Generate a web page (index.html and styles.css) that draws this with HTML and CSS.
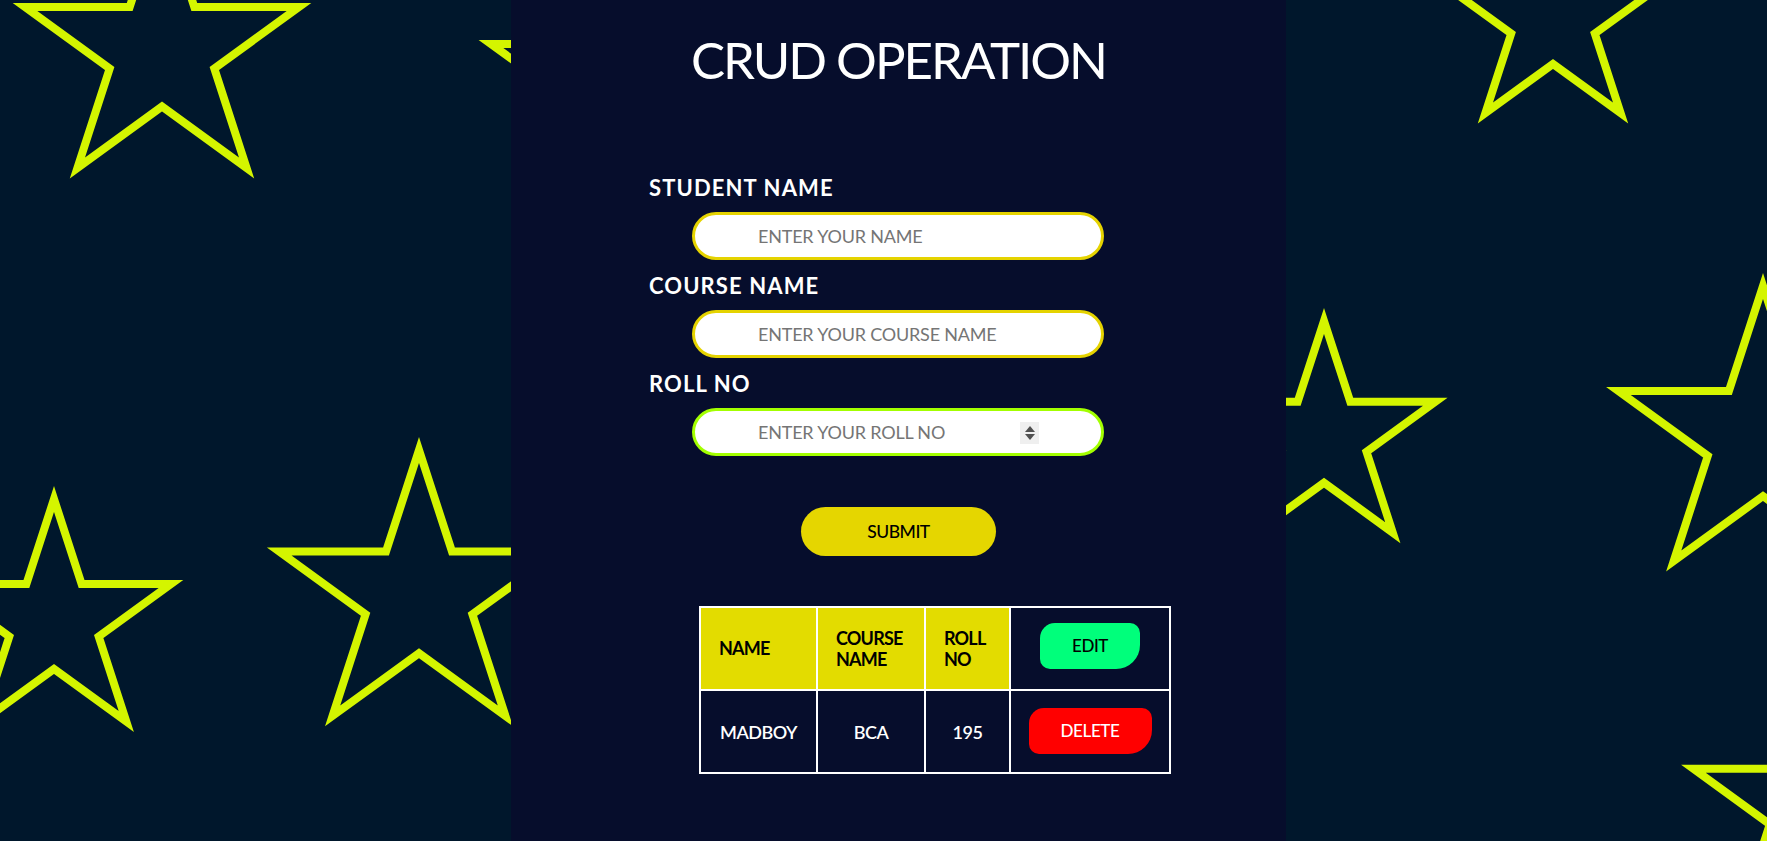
FILE: index.html
```html
<!DOCTYPE html>
<html lang="en">
<head>
<meta charset="utf-8">
<title>CRUD Operation</title>
<link rel="stylesheet" href="styles.css">
</head>
<body>
<svg class="bg-stars" width="1767" height="841" viewBox="0 0 1767 841" aria-hidden="true">
  <g fill="none" stroke="#d4f500" stroke-width="8" stroke-linejoin="miter">
    <polygon points="162,-92.5 194.3,7 299,7 214.3,68.5 246.6,168 162,106.5 77.4,168 109.7,68.5 25,7 129.7,7"/>
    <polygon points="605,-39 631.9,43.9 719.1,43.9 648.6,95.2 675.5,178.1 605,126.8 534.5,178.1 561.4,95.2 490.9,43.9 578.1,43.9"/>
    <polygon points="54,499 81.6,584 171,584 98.7,636.5 126.3,721.5 54,669 -18.3,721.5 9.3,636.5 -63,584 26.4,584"/>
    <polygon points="419,450 452,551.6 558.8,551.6 472.4,614.3 505.4,715.9 419,653.2 332.6,715.9 365.6,614.3 279.2,551.6 386,551.6"/>
    <polygon points="1553,-95 1578.8,-15.5 1662.4,-15.5 1594.8,33.6 1620.6,113 1553,63.9 1485.4,113 1511.2,33.6 1443.6,-15.5 1527.2,-15.5"/>
    <polygon points="1324,321 1350.3,401.8 1435.3,401.8 1366.5,451.8 1392.8,532.7 1324,482.7 1255.2,532.7 1281.5,451.8 1212.7,401.8 1297.7,401.8"/>
    <polygon points="1763,286 1797.1,391 1907.6,391 1818.2,455.9 1852.3,561 1763,496.1 1673.7,561 1707.8,455.9 1618.4,391 1728.9,391"/>
    <polygon points="1817,679 1846.2,768.8 1940.6,768.8 1864.2,824.3 1893.4,914.2 1817,858.7 1740.6,914.2 1769.8,824.3 1693.4,768.8 1787.8,768.8"/>
  </g>
</svg>
<div class="page">
  <main class="panel">
    <h1 class="title">CRUD OPERATION</h1>
    <form class="form">
      <label class="label" for="sname">STUDENT NAME</label>
      <input class="field" id="sname" type="text" placeholder="ENTER YOUR NAME">
      <label class="label" for="cname">COURSE NAME</label>
      <input class="field" id="cname" type="text" placeholder="ENTER YOUR COURSE NAME">
      <label class="label" for="rollno">ROLL NO</label>
      <div class="field-wrap">
        <input class="field field-roll" id="rollno" type="text" placeholder="ENTER YOUR ROLL NO">
        <span class="spin" aria-hidden="true"><span class="spin-up"></span><span class="spin-down"></span></span>
      </div>
      <button class="submit" type="button">SUBMIT</button>
    </form>
    <table class="records">
      <colgroup>
        <col class="c1"><col class="c2"><col class="c3"><col class="c4">
      </colgroup>
      <tr>
        <th>NAME</th>
        <th>COURSE NAME</th>
        <th>ROLL NO</th>
        <td class="action"><button class="btn btn-edit" type="button">EDIT</button></td>
      </tr>
      <tr>
        <td>MADBOY</td>
        <td>BCA</td>
        <td>195</td>
        <td class="action"><button class="btn btn-delete" type="button">DELETE</button></td>
      </tr>
    </table>
  </main>
</div>
</body>
</html>
```

FILE: styles.css
```css
* { box-sizing: border-box; }

html, body {
  margin: 0;
  padding: 0;
}

body {
  background: #00172c;
  min-height: 100vh;
  overflow: hidden;
  font-family: "Lato", "Noto Sans", sans-serif;
}

.bg-stars {
  position: fixed;
  left: 0;
  top: 0;
  z-index: 0;
}

.page {
  position: relative;
  z-index: 1;
  display: flex;
}

.panel {
  margin-left: 511px;
  width: 775px;
  min-height: 841px;
  background: #060d2c;
  display: flex;
  flex-direction: column;
}

.title {
  margin: 34px 0 0;
  font-size: 51px;
  line-height: 1;
  font-weight: 400;
  color: #ffffff;
  text-align: center;
  letter-spacing: -2px;
}

.form {
  margin-top: 91px;
  padding-left: 138px;
  display: flex;
  flex-direction: column;
  align-items: flex-start;
}

.label {
  font-size: 22px;
  line-height: 23px;
  font-weight: 700;
  color: #ffffff;
  letter-spacing: 1.1px;
  margin-bottom: 13px;
}

.field {
  margin-left: 43px;
  margin-bottom: 14px;
  width: 412px;
  height: 48px;
  border: 3px solid #e5d300;
  border-radius: 30px;
  background: #ffffff;
  padding: 0 62px 0 63px;
  font-family: "Lato", "Noto Sans", sans-serif;
  font-size: 18px;
  letter-spacing: -0.2px;
  color: #222;
  outline: none;
}

.field::placeholder {
  color: #757575;
  opacity: 1;
}

.field-wrap {
  position: relative;
  margin-left: 43px;
}

.field-wrap .field {
  margin-left: 0;
  margin-bottom: 0;
}

.field-roll {
  border-color: #a3ff00;
}

.spin {
  position: absolute;
  left: 328px;
  top: 14px;
  width: 19px;
  height: 22px;
  background: #efefef;
  display: flex;
  flex-direction: column;
  align-items: center;
  justify-content: center;
  gap: 2px;
}

.spin-up, .spin-down {
  width: 0;
  height: 0;
  border-left: 5px solid transparent;
  border-right: 5px solid transparent;
}

.spin-up { border-bottom: 6px solid #505050; }
.spin-down { border-top: 6px solid #505050; }

.submit {
  margin: 51px 0 0 152px;
  width: 195px;
  height: 49px;
  border: none;
  border-radius: 25px;
  background: #e5d600;
  color: #000;
  font-family: "Lato", "Noto Sans", sans-serif;
  font-size: 17.5px;
  font-weight: 500;
  letter-spacing: -0.5px;
  padding: 0;
}

.records {
  margin: 50px 0 0 188px;
  width: 470px;
  border-collapse: collapse;
  table-layout: fixed;
}

.c1 { width: 117px; }
.c2 { width: 108px; }
.c3 { width: 85px; }
.c4 { width: 160px; }

.records tr { height: 83px; }

.records th, .records td {
  border: 2px solid #ffffff;
  vertical-align: middle;
}

.records th {
  background: #e3dc00;
  color: #000;
  font-size: 18px;
  line-height: 21px;
  font-weight: 700;
  letter-spacing: -0.8px;
  text-align: left;
  padding: 0 18px;
}

.records td {
  color: #ffffff;
  font-size: 18px;
  font-weight: 600;
  letter-spacing: -0.5px;
  text-align: center;
  padding: 0;
}

.btn {
  display: block;
  margin: 0 auto;
  border: none;
  height: 46px;
  border-radius: 15px 10px 24px 10px;
  font-family: "Lato", "Noto Sans", sans-serif;
  font-size: 17px;
  font-weight: 500;
  letter-spacing: -0.4px;
  padding: 0;
}

.btn-edit {
  width: 100px;
  background: #00ff7b;
  color: #000;
  margin-bottom: 6px;
}

.btn-delete {
  width: 123px;
  background: #ff0000;
  color: #fff;
  margin-bottom: 2px;
}
```
